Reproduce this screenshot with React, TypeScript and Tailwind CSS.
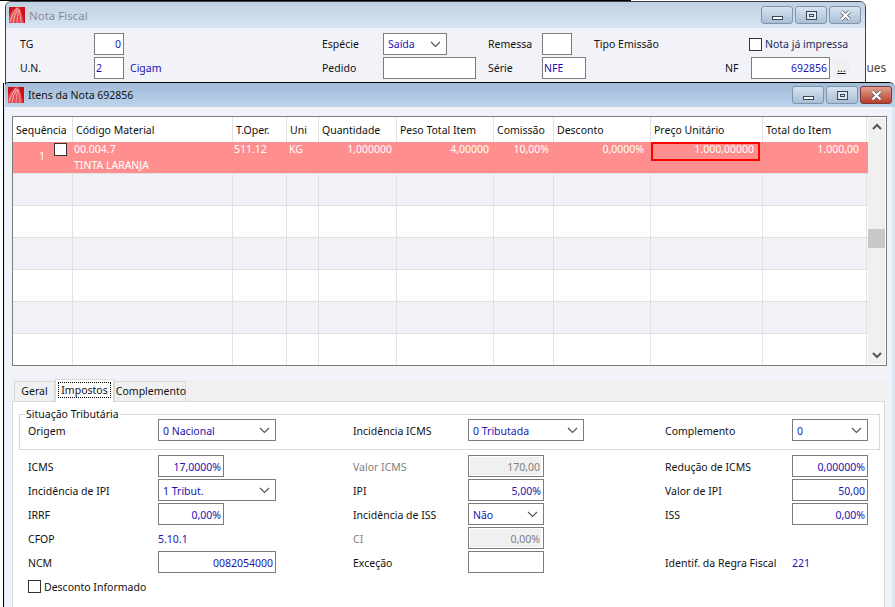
import React from 'react';

const blue = 'text-[#1a14b4]';

const columns = ['Sequência', 'Código Material', 'T.Oper.', 'Uni', 'Quantidade', 'Peso Total Item', 'Comissão', 'Desconto', 'Preço Unitário', 'Total do Item'];
const gridCols = 'grid grid-cols-[60px_160px_54px_32px_78px_97px_60px_97px_112px_104px]';
const formCols = 'grid grid-cols-[130px_195px_115px_197px_127px_76px] [&_span]:translate-y-[1px]';

const AppIcon = () => (
  <svg width="16" height="16" viewBox="0 0 16 16" className="shrink-0">
    <rect width="16" height="16" fill="#cf1018" />
    <path d="M0 16 L0 9 Q3 3 8 0 L10 0 Q13 5 15 16 Z" fill="#e2474d" />
    <path d="M1 15 Q3 7 8 1" fill="none" stroke="#f7c0c0" strokeWidth="1" />
    <path d="M4 16 Q5 8 9 2" fill="none" stroke="#f7c0c0" strokeWidth="1" />
    <path d="M8 16 Q8 9 10 3" fill="none" stroke="#f2a0a0" strokeWidth="1" />
    <path d="M12 16 Q12 9 10 2" fill="none" stroke="#f2a0a0" strokeWidth="1" />
  </svg>
);

const WinButton = ({ kind, danger }: { kind: 'min' | 'max' | 'close'; danger?: boolean }) => (
  <div
    className={`flex h-[18px] w-[32px] items-center justify-center rounded-[3px] border ${
      danger
        ? 'border-[#7a3a34] bg-gradient-to-b from-[#e0a090] to-[#b8392a]'
        : 'border-[#8094aa] bg-gradient-to-b from-[#d8e4f0] to-[#a9bfd6]'
    }`}
  >
    {kind === 'min' && <div className="mt-[5px] h-[4px] w-[11px] border border-[#3c4654] bg-white" />}
    {kind === 'max' && (
      <div className="flex h-[9px] w-[11px] items-center justify-center border border-[#3c4654] bg-[#dfe8f2]">
        <div className="h-[3px] w-[5px] border border-[#3c4654]" />
      </div>
    )}
    {kind === 'close' && (
      <svg width="13" height="11" viewBox="0 0 13 11">
        <path d="M2.5 1.5 L10.5 9.5 M10.5 1.5 L2.5 9.5" stroke="#4f5a66" strokeWidth="3.6" />
        <path d="M2.5 1.5 L10.5 9.5 M10.5 1.5 L2.5 9.5" stroke="#fff" strokeWidth="2.2" />
      </svg>
    )}
  </div>
);

const Field = ({ value = '', width, left, disabled }: { value?: string; width: string; left?: boolean; disabled?: boolean }) => (
  <div className={`flex h-[22px] ${width} shrink-0 items-center border border-[#7c7c7c] bg-white ${left ? 'justify-start pl-[1px]' : 'justify-end pr-[2px]'} ${disabled ? 'p-[1px]' : ''}`}>
    {disabled ? (
      <div className="flex h-full w-full items-center justify-end bg-[#f0f0f0] pr-[1px] text-[#808080]"><span>{value}</span></div>
    ) : (
      <span className={blue}>{value}</span>
    )}
  </div>
);

const Select = ({ value, width }: { value: string; width: string }) => (
  <div className={`flex h-[22px] ${width} items-center justify-between border border-[#7c7c7c] bg-white pl-[4px] pr-[4px]`}>
    <span className={blue}>{value}</span>
    <svg width="11" height="7" viewBox="0 0 11 7" className="mr-[1px]">
      <path d="M1 1 L5.5 5.5 L10 1" fill="none" stroke="#555" strokeWidth="1.2" />
    </svg>
  </div>
);

const Check = () => <div className="h-[13px] w-[13px] shrink-0 border border-[#333] bg-white" />;

export default function App() {
  return (
    <div className="relative h-[607px] w-[895px] overflow-hidden bg-white font-['Noto_Sans',sans-serif] text-[10.5px] leading-none text-[#111]">
      {/* janelas de tras */}
      <div className="absolute left-0 top-0 h-[1px] w-[631px] bg-black" />
      <div className="absolute left-[859px] top-[62px] text-[12px] text-[#444]">ques</div>

      {/* Nota Fiscal */}
      <div className="absolute left-[5px] top-[1px] h-[90px] w-[861px] overflow-hidden rounded-t-[6px] border border-[#3a3f47] bg-[#f1f3f9]">
        <div className="flex h-[26px] items-center justify-between bg-gradient-to-b from-[#c0d0e0] to-[#d6e5f3] pl-[3px] pr-[4px]">
          <div className="flex items-center gap-[4px]">
            <AppIcon />
            <span className="translate-y-[1px] text-[11.5px] text-[#8c8c8c]">Nota Fiscal</span>
          </div>
          <div className="flex gap-[2px]">
            <WinButton kind="min" />
            <WinButton kind="max" />
            <WinButton kind="close" />
          </div>
        </div>
        <div className="grid grid-cols-[74px_228px_61px_105px_54px_52px_155px_111px] gap-y-[2px] pl-[14px] pt-[5px]">
          <span className="self-center">TG</span>
          <div><Field value="0" width="w-[30px]" /></div>
          <span className="self-center">Espécie</span>
          <div><Select value="Saída" width="w-[64px]" /></div>
          <span className="self-center">Remessa</span>
          <div><Field width="w-[30px]" /></div>
          <span className="self-center">Tipo Emissão</span>
          <div className="flex items-center gap-[3px] whitespace-nowrap">
            <Check />
            <span className="text-[#1a2a60]">Nota já impressa</span>
          </div>

          <span className="self-center">U.N.</span>
          <div className="flex items-center gap-[6px]">
            <Field value="2" width="w-[30px]" left />
            <span className={blue}>Cigam</span>
          </div>
          <span className="self-center">Pedido</span>
          <div><Field width="w-[93px]" /></div>
          <span className="self-center">Série</span>
          <div><Field value="NFE" width="w-[44px]" left /></div>
          <span className="self-center pl-[131px]">NF</span>
          <div className="flex items-center gap-[3px] pl-[2px]">
            <Field value="692856" width="w-[79px]" />
            <div className="flex h-[18px] w-[17px] shrink-0 items-center justify-center bg-[#f0f0f0] underline">...</div>
          </div>
        </div>
      </div>

      {/* Itens da Nota */}
      <div className="absolute bottom-0 left-[3px] right-0 top-[82px] flex flex-col overflow-hidden rounded-t-[6px] border-l border-t border-black bg-[#f1f3f9]">
        <div className="flex h-[24px] shrink-0 items-center justify-between bg-gradient-to-b from-[#a0bbd8] to-[#bdd4ec] pl-[4px] pr-[3px]">
          <div className="flex items-center gap-[4px]">
            <AppIcon />
            <span>Itens da Nota 692856</span>
          </div>
          <div className="flex gap-[2px]">
            <WinButton kind="min" />
            <WinButton kind="max" />
            <WinButton kind="close" danger />
          </div>
        </div>

        <div className="ml-[8px] mr-[8px] mt-[9px] flex h-[250px] border border-[#7c7c7c] bg-white">
          <div className="relative flex-1 overflow-hidden">
            <div className={`${gridCols} h-[25px] bg-white`}>
              {columns.map((c) => (
                <div key={c} className="flex items-center whitespace-nowrap border-r border-[#e2e2e2] pl-[3px] pt-[1px]">{c}</div>
              ))}
            </div>
            <div className={`${gridCols} relative h-[31px] bg-[#ff8f8f] text-white`}>
              <div className="relative pl-[26px] pt-[9px]">
                1
                <div className="absolute right-[6px] top-[1px]"><Check /></div>
              </div>
              <div className="flex flex-col gap-[5.5px] pl-[1px] pt-[2px]">
                <span>00.004.7</span>
                <span>TINTA LARANJA</span>
              </div>
              <div className="pl-[1px] pt-[2px]">511.12</div>
              <div className="pl-[2px] pt-[2px]">KG</div>
              <div className="pr-[5px] pt-[2px] text-right">1,000000</div>
              <div className="pr-[5px] pt-[2px] text-right">4,00000</div>
              <div className="pr-[5px] pt-[2px] text-right">10,00%</div>
              <div className="pr-[7px] pt-[2px] text-right">0,0000%</div>
              <div className="mr-[3px] h-[19px] border-2 border-[#ff0000] pr-[4px] text-right">1.000,00000</div>
              <div className="pr-[8px] pt-[2px] text-right">1.000,00</div>
            </div>
            {[0, 1, 2, 3, 4, 5].map((r) => (
              <div key={r} className={`${gridCols} h-[32px] border-t border-[#e2e2e2] ${r % 2 === 0 ? 'bg-[#f0f2f8]' : 'bg-white'}`}>
                {columns.map((c) => (
                  <div key={c} className="border-r border-[#e2e2e2]" />
                ))}
              </div>
            ))}
          </div>
          <div className="my-[1px] mr-[1px] flex w-[17px] shrink-0 flex-col items-center bg-[#f0f0f0]">
            <svg width="10" height="8" viewBox="0 0 10 8" className="mt-[5px]">
              <path d="M1 6 L5 2 L9 6" fill="none" stroke="#555" strokeWidth="2" />
            </svg>
            <div className="mt-[98px] h-[19px] w-full bg-[#c8c8c8]" />
            <svg width="10" height="8" viewBox="0 0 10 8" className="mb-[5px] mt-auto">
              <path d="M1 2 L5 6 L9 2" fill="none" stroke="#555" strokeWidth="2" />
            </svg>
          </div>
        </div>

        {/* abas */}
        <div className="ml-[9px] mr-[8px] mt-[14px] flex h-[21px] shrink-0 items-end bg-[#f0f0f0] pl-[1px]">
          <div className="flex h-[20px] w-[41px] items-center justify-center border border-b-0 border-[#d9d9d9] bg-[#f0f0f0]">Geral</div>
          <div className="z-10 mb-[-1px] flex h-[23px] w-[59px] items-center justify-center border border-b-0 border-[#d9d9d9] bg-white pb-[2px]">
            <span className="border border-dotted border-black px-[2px] py-[2px]">Impostos</span>
          </div>
          <div className="flex h-[20px] w-[72px] items-center justify-center border border-b-0 border-[#d9d9d9] bg-[#f0f0f0] pl-[2px]">Complemento</div>
        </div>
        <div className="ml-[8px] mr-[10px] flex-1 border border-b-0 border-[#d9d9d9] bg-white pl-[6px] pr-[4px] pt-[7px]">
          <fieldset className="h-[41px] border border-[#d9d9d9]">
            <legend className="ml-[5px] px-[1px] leading-[10px]">Situação Tributária</legend>
            <div className={`${formCols} items-center pl-[8px]`}>
              <span>Origem</span>
              <Select value="0 Nacional" width="w-[118px]" />
              <span>Incidência ICMS</span>
              <Select value="0 Tributada" width="w-[116px]" />
              <span>Complemento</span>
              <Select value="0" width="w-[76px]" />
            </div>
          </fieldset>

          <div className={`${formCols} mt-[5px] items-center gap-y-[2px] pl-[9px]`}>
            <span>ICMS</span>
            <Field value="17,0000%" width="w-[66px]" />
            <span className="text-[#808080]">Valor ICMS</span>
            <Field value="170,00" width="w-[76px]" disabled />
            <span>Redução de ICMS</span>
            <Field value="0,00000%" width="w-[76px]" />

            <span>Incidência de IPI</span>
            <Select value="1 Tribut." width="w-[118px]" />
            <span>IPI</span>
            <Field value="5,00%" width="w-[76px]" />
            <span>Valor de IPI</span>
            <Field value="50,00" width="w-[76px]" />

            <span>IRRF</span>
            <Field value="0,00%" width="w-[66px]" />
            <span>Incidência de ISS</span>
            <Select value="Não" width="w-[76px]" />
            <span>ISS</span>
            <Field value="0,00%" width="w-[76px]" />

            <span>CFOP</span>
            <span className={blue}>5.10.1</span>
            <span className="text-[#808080]">CI</span>
            <Field value="0,00%" width="w-[76px]" disabled />
            <span />
            <span />

            <span>NCM</span>
            <Field value="0082054000" width="w-[118px]" />
            <span>Exceção</span>
            <Field width="w-[76px]" />
            <span>Identif. da Regra Fiscal</span>
            <span className={blue}>221</span>
          </div>

          <div className="mt-[7px] flex items-center gap-[3px] pl-[9px]">
            <Check />
            <span className="translate-y-[1px]">Desconto Informado</span>
          </div>
        </div>
      </div>

      {/* bordas */}
      <div className="absolute bottom-0 right-0 top-[107px] w-[3px] bg-[#dbe8f6]" />
      <div className="absolute bottom-0 left-[3px] top-[83px] w-[2px] border-l border-black bg-[#dce8f6]" />
    </div>
  );
}
